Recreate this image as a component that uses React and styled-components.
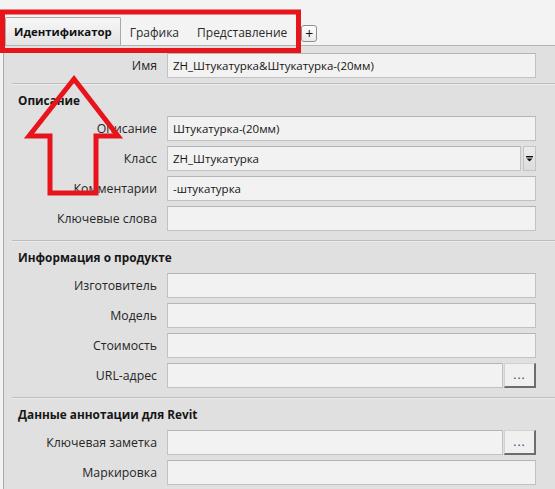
import React from "react";
import styled, { createGlobalStyle } from "styled-components";

const GlobalStyle = createGlobalStyle`
  html, body {
    margin: 0;
    padding: 0;
    background: #f3f3f3;
  }
  body {
    font-family: "Open Sans", "Noto Sans", sans-serif;
    font-size: 12.3px;
    color: #1e1e1e;
  }
`;

const Window = styled.div`
  position: relative;
  width: 555px;
  height: 489px;
  overflow: hidden;
  background: #f3f3f3;
`;

const TabStrip = styled.div`
  display: flex;
  align-items: flex-end;
  height: 30px;
  margin-top: 15px;
  padding-left: 5px;
  border-bottom: 1px solid #b4b4b4;
`;

const Tab = styled.div`
  display: flex;
  align-items: center;
  height: ${(p) => (p.$active ? "27px" : "26px")};
  padding: 0 8px;
  font-size: ${(p) => (p.$active ? "11.4px" : "12px")};
  font-weight: ${(p) => (p.$active ? 700 : 400)};
  color: ${(p) => (p.$active ? "#111" : "#2a2a2a")};
  background: ${(p) =>
    p.$active ? "linear-gradient(#f7f7f7, #e4e4e4)" : "transparent"};
  border: 1px solid ${(p) => (p.$active ? "#a8a8a8" : "transparent")};
  border-bottom: none;
  border-radius: 2px 2px 0 0;
  white-space: nowrap;
`;

const AddTab = styled.div`
  display: flex;
  align-items: center;
  justify-content: center;
  width: 14px;
  height: 15px;
  margin: 0 0 3px 5px;
  border: 1px solid #8e8e8e;
  border-radius: 3px;
  background: linear-gradient(#ffffff, #e9e9e9);
  font-size: 14px;
  line-height: 1;
  color: #111;
`;

const Panel = styled.div`
  margin-left: 3px;
  padding-top: 7px;
  background: #e0e0e0;
  border-left: 1px solid #a9a9a9;
  height: 100%;
`;

const Section = styled.section`
  padding: ${(p) => (p.$first ? "0 0 5px" : "7px 0 9px")};
  margin-left: ${(p) => (p.$first ? "0" : "8px")};
  border-top: ${(p) => (p.$first ? "none" : "1px solid #bdbdbd")};
  box-shadow: ${(p) => (p.$first ? "none" : "inset 0 1px 0 #ececec")};
`;

const SectionTitle = styled.h3`
  margin: 0 0 7px 6px;
  font-size: 11.8px;
  font-weight: 700;
  line-height: 18px;
  color: #161616;
`;

const Rows = styled.div`
  display: grid;
  grid-template-columns: ${(p) => (p.$indent ? "145px" : "153px")} 369px;
  column-gap: 10px;
  row-gap: 5px;
`;

const Label = styled.label`
  align-self: center;
  text-align: right;
  white-space: nowrap;
  color: #262626;
`;

const Field = styled.div`
  display: flex;
  gap: 1px;
  height: 25px;
`;

const Input = styled.div`
  flex: 1;
  display: flex;
  align-items: center;
  padding: 0 5px;
  background: #f2f2f2;
  border: 1px solid #c2c2c2;
  border-top-color: #b5b5b5;
  font-size: 11.5px;
  color: #151515;
  white-space: nowrap;
  overflow: hidden;
`;

const DropButton = styled.div`
  display: flex;
  align-items: center;
  justify-content: center;
  width: 11px;
  height: 23px;
  margin-left: 1px;
  background: linear-gradient(#ececec, #dcdcdc);
  border: 1px solid #c4c4c4;
`;

const BrowseButton = styled.div`
  display: flex;
  align-items: flex-end;
  justify-content: center;
  width: 32px;
  padding-bottom: 5px;
  box-sizing: border-box;
  background: #f0f0f0;
  border: 1px solid #d2d2d2;
  border-right: 2px solid #6d6d6d;
  border-bottom: 2px solid #6d6d6d;
  font-size: 12px;
  letter-spacing: 1px;
  line-height: 1;
  color: #3a3a6a;
`;

const Callout = styled.svg`
  position: absolute;
  left: 0;
  top: 0;
  pointer-events: none;
`;

function Row({ label, value, kind }) {
  return (
    <>
      <Label>{label}</Label>
      <Field>
        <Input>{value}</Input>
        {kind === "select" && (
          <DropButton>
            <svg width="7" height="6" viewBox="0 0 7 6">
              <rect x="0" y="0" width="7" height="1.4" fill="#111" />
              <path d="M0.5 2.4h6L3.5 5.6z" fill="#111" />
            </svg>
          </DropButton>
        )}
        {kind === "browse" && <BrowseButton>...</BrowseButton>}
      </Field>
    </>
  );
}

export default function App() {
  return (
    <Window>
      <GlobalStyle />
      <TabStrip>
        <Tab $active>Идентификатор</Tab>
        <Tab>Графика</Tab>
        <Tab>Представление</Tab>
        <AddTab>+</AddTab>
      </TabStrip>

      <Panel>
        <Section $first>
          <Rows>
            <Row label="Имя" value="ZH_Штукатурка&Штукатурка-(20мм)" />
          </Rows>
        </Section>

        <Section>
          <SectionTitle>Описание</SectionTitle>
          <Rows $indent>
            <Row label="Описание" value="Штукатурка-(20мм)" />
            <Row label="Класс" value="ZH_Штукатурка" kind="select" />
            <Row label="Комментарии" value="-штукатурка" />
            <Row label="Ключевые слова" />
          </Rows>
        </Section>

        <Section>
          <SectionTitle>Информация о продукте</SectionTitle>
          <Rows $indent>
            <Row label="Изготовитель" />
            <Row label="Модель" />
            <Row label="Стоимость" />
            <Row label="URL-адрес" kind="browse" />
          </Rows>
        </Section>

        <Section>
          <SectionTitle>Данные аннотации для Revit</SectionTitle>
          <Rows $indent>
            <Row label="Ключевая заметка" kind="browse" />
            <Row label="Маркировка" />
          </Rows>
        </Section>
      </Panel>

      <Callout width="555" height="489" viewBox="0 0 555 489">
        <rect
          x="2.5"
          y="12"
          width="296"
          height="38.5"
          fill="none"
          stroke="#e8141c"
          strokeWidth="5"
        />
        <polygon
          points="74,79 118,136 96,136 96,193 50,193 50,136 29,136"
          fill="none"
          stroke="#e8141c"
          strokeWidth="5"
          strokeLinejoin="miter"
        />
      </Callout>
    </Window>
  );
}
